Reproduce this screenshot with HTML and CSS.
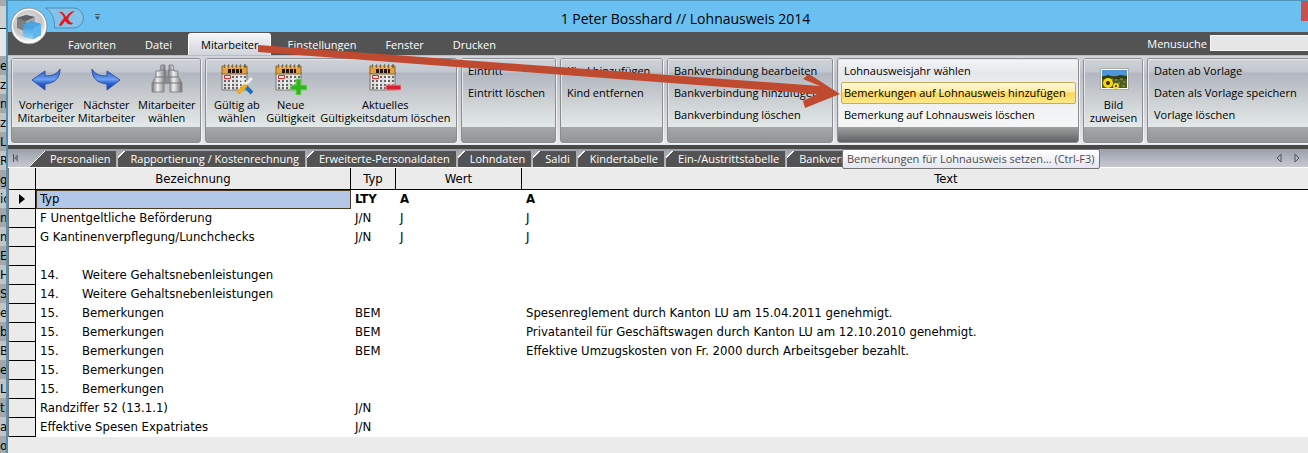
FILE: index.html
```
<!DOCTYPE html>
<html lang="de">
  <head>
    <meta charset="utf-8" />
    <title>1 Peter Bosshard // Lohnausweis 2014</title>
    <link rel="stylesheet" href="styles.css">
  </head>

  <body class="desktop">
    <div class="background-list">
      <div class="background-head"></div>
      <div class="background-row">er</div>
      <div class="background-row">ze</div>
      <div class="background-row">nä</div>
      <div class="background-row">z</div>
      <div class="background-row">Lu</div>
      <div class="background-row">Re</div>
      <div class="background-row">g</div>
      <div class="background-row">ic</div>
      <div class="background-row">n</div>
      <div class="background-row">m</div>
      <div class="background-row">Er</div>
      <div class="background-row">H</div>
      <div class="background-row">Su</div>
      <div class="background-row">e</div>
      <div class="background-row">be</div>
      <div class="background-row">Bü</div>
      <div class="background-row">er</div>
      <div class="background-row">Lu</div>
      <div class="background-row">t</div>
      <div class="background-row">a</div>
      <div class="background-row">on</div>
    </div>

    <div class="window">
      <header class="title-bar">
        <button class="quick-button" aria-label="Abbrechen">
          <svg width="40" height="22" viewBox="0 0 40 22">
            <path d="M.5 1h28a10 10 0 0 1 0 20H9.500C10 12 7 5 .5 1z" fill="#83c3ea" stroke="#4f8db2" />
            <path d="M14 5c3-1 5 1 7 5 2-3 5-6 9-6-4 3-6 5-7 8 2 3 3 4 5 4-2 3-6 1-8-2-2 3-3 5-6 5 1-4 3-5 5-8-1-3-3-5-5-6z" fill="#e81414" />
          </svg>
        </button>
        <button class="quick-more" aria-label="Schnellzugriff anpassen">
          <svg width="8" height="8" viewBox="0 0 8 8">
            <path d="M1 1.500h5" stroke="#44525c" />
            <path d="M1 3.500h5L3.500 7z" fill="#44525c" />
          </svg>
        </button>
        <h1 class="title">1 Peter Bosshard // Lohnausweis 2014</h1>
        <button class="close-button" aria-label="Schliessen"></button>
      </header>

      <button class="app-button" aria-label="Anwendungsmenü">
        <svg width="40" height="40" viewBox="0 0 40 40">
          <defs>
            <radialGradient id="orb" cx=".45" cy=".35" r=".65">
              <stop offset="0" stop-color="#e2e2e2" />
              <stop offset=".7" stop-color="#c4c4c4" />
              <stop offset="1" stop-color="#fff" />
            </radialGradient>
            <linearGradient id="cube" x2="0" y2="1">
              <stop offset="0" stop-color="#3c97d6" />
              <stop offset="1" stop-color="#8fd2fa" />
            </linearGradient>
          </defs>
          <circle cx="20" cy="21" r="18" fill="#333" opacity=".6" />
          <circle cx="20" cy="20" r="18" fill="#fafafa" stroke="#8a8f94" />
          <circle cx="20" cy="20" r="16" fill="url(#orb)" />
          <path d="M8 12l9-3 9 2v11l-9 4-9-4z" fill="#7e8082" />
          <path d="M8 12l9-3 9 2-9 4z" fill="#5e6163" />
          <path d="M17 15l9-4v11l-9 4z" fill="#a5a8aa" />
          <path d="M14 19l8-4 10 3v11l-8 4-10-3z" fill="#3b9be0" />
          <path d="M14 19l8-4 10 3-8 4z" fill="#4aa5e2" />
          <path d="M24 22l8-4v11l-8 4z" fill="#5db4ee" />
          <path d="M14 19l10 3v11l-10-3z" fill="url(#cube)" />
        </svg>
      </button>

      <nav class="menu-bar">
        <div class="menu-items">
          <button class="menu-item">Favoriten</button>
          <button class="menu-item">Datei</button>
          <button class="menu-item menu-item-active">Mitarbeiter</button>
          <button class="menu-item">Einstellungen</button>
          <button class="menu-item">Fenster</button>
          <button class="menu-item">Drucken</button>
        </div>
        <div class="menu-search">
          <label for="menusuche">Menusuche</label>
          <input id="menusuche" class="menu-search-input" type="text">
        </div>
      </nav>

      <div class="ribbon">
        <section class="group group-employee">
          <div class="group-body">
            <button class="big-button">
              <svg width="32" height="32" viewBox="0 0 32 32">
                <defs>
                  <linearGradient id="arrow" x2="0" y2="1">
                    <stop offset="0" stop-color="#2552c0" />
                    <stop offset=".5" stop-color="#6da0f0" />
                    <stop offset=".7" stop-color="#2a5fd0" />
                    <stop offset="1" stop-color="#1b3fae" />
                  </linearGradient>
                </defs>
                <path d="M2 17l13-9v5c8 0 12-2 15-7 0 9-5 14-15 15v6z" fill="url(#arrow)" stroke="#2c52ae" />
              </svg>
              <span>Vorheriger<br>Mitarbeiter</span>
            </button>
            <button class="big-button">
              <svg width="32" height="32" viewBox="0 0 32 32">
                <path d="M30 17l-13-9v5c-8 0-12-2-15-7 0 9 5 14 15 15v6z" fill="url(#arrow)" stroke="#2c52ae" />
              </svg>
              <span>Nächster<br>Mitarbeiter</span>
            </button>
            <button class="big-button">
              <svg width="32" height="32" viewBox="0 0 32 32">
                <defs>
                  <linearGradient id="metal">
                    <stop offset="0" stop-color="#6d6f70" />
                    <stop offset=".4" stop-color="#f0f0f0" />
                    <stop offset="1" stop-color="#6a6c6d" />
                  </linearGradient>
                </defs>
                <path d="M13 13h6v8h-6z" fill="#898b8c" />
                <path d="M10 2h4v5h1v7h-1l-1 4v11H1V20l4-7V8h4z" fill="url(#metal)" stroke="#85888a" />
                <path d="M18 2h4l1 6h4v5l4 7v9H19V18l-1-4h-1V7h1z" fill="url(#metal)" stroke="#85888a" />
                <path d="M5 14h9M18 14h9M2 20h11M19 20h11M9 7h5M18 7h5" stroke="#727577" />
              </svg>
              <span>Mitarbeiter<br>wählen</span>
            </button>
          </div>
        </section>

        <section class="group group-validity">
          <div class="group-body">
            <button class="big-button big-button-narrow">
              <svg width="32" height="32" viewBox="0 0 32 32">
                <defs>
                  <g id="calendar">
                    <path d="M1 9h25v18H1z" fill="#dedede" stroke="#777" />
                    <path d="M1 3h25v8H1z" fill="#e6a23a" stroke="#8a6832" />
                    <path d="M4 1v4M8 1v4M12 1v4M16 1v4M20 1v4M24 1v4" stroke="#444" />
                    <path d="M5 1v4M9 1v4M13 1v4M17 1v4M21 1v4" stroke="#eee" />
                    <path d="M7 8h14" stroke="#201508" stroke-width="4" stroke-dasharray="3 1" />
                    <path d="M3 14h23M3 18h23M3 22h23M3 25h23" stroke="#666" stroke-width="2" stroke-dasharray="2 2" />
                    <path d="M10 12v15M18 12v15" stroke="#fff" />
                    <path d="M3.500 12.500h6v3h-6z" fill="#eee" stroke="#e32626" />
                  </g>
                </defs>
                <use href="#calendar" />
                <path d="M17 16c4-1 6 2 5 5l8 9M21 25L31 15" stroke="#eee" stroke-width="3" fill="none" />
                <path d="M25 24l6 6" stroke="#1472c4" stroke-width="4" />
                <path d="M24 23l-6 6" stroke="#efad1e" stroke-width="4" stroke-linecap="round" />
              </svg>
              <span>Gültig ab<br>wählen</span>
            </button>
            <button class="big-button big-button-narrow">
              <svg width="32" height="32" viewBox="0 0 32 32">
                <use href="#calendar" />
                <path d="M21 16h5v6h6v5h-6v5h-5v-5h-5v-5h5z" fill="#32b51e" stroke="#7ad668" />
              </svg>
              <span>Neue<br>Gültigkeit</span>
            </button>
            <button class="big-button big-button-wide">
              <svg width="32" height="32" viewBox="0 0 32 32">
                <use href="#calendar" />
                <path d="M17 22h15v5H17z" fill="#d92031" stroke="#e98a92" />
              </svg>
              <span>Aktuelles<br>Gültigkeitsdatum löschen</span>
            </button>
          </div>
        </section>

        <section class="group group-entry">
          <div class="group-body group-list">
            <button class="list-button">Eintritt</button>
            <button class="list-button">Eintritt löschen</button>
          </div>
        </section>

        <section class="group group-child">
          <div class="group-body group-list">
            <button class="list-button">Kind hinzufügen</button>
            <button class="list-button">Kind entfernen</button>
          </div>
        </section>

        <section class="group group-bank">
          <div class="group-body group-list">
            <button class="list-button">Bankverbindung bearbeiten</button>
            <button class="list-button">Bankverbindung hinzufügen</button>
            <button class="list-button">Bankverbindung löschen</button>
          </div>
        </section>

        <section class="group group-statement group-hover">
          <div class="group-body group-list">
            <button class="list-button">Lohnausweisjahr wählen</button>
            <button class="list-button list-button-hover">Bemerkungen auf Lohnausweis hinzufügen</button>
            <button class="list-button">Bemerkung auf Lohnausweis löschen</button>
          </div>
        </section>

        <section class="group group-picture">
          <div class="group-body">
            <button class="big-button big-button-picture">
              <svg width="32" height="32" viewBox="0 0 32 32">
                <path d="M2.500 5.500h28v21h-28z" fill="#fff" stroke="#aaa" />
                <path d="M4 7h25v18H4z" fill="#4c5c24" />
                <path d="M4 7h25v6H4z" fill="#4f93d8" />
                <path d="M4 14l6-2 6 2 6-2 7 1v3H4z" fill="#2c3d18" />
                <path d="M17 17h2M22 16h3M25 19h2M20 20h2M13 16h2M24 23h3" stroke="#a5a83c" />
                <circle cx="10" cy="20" r="5" fill="#f6d80e" />
                <circle cx="10" cy="20" r="2" fill="#3d2506" />
                <circle cx="18" cy="23" r="3" fill="#f6d80e" />
                <circle cx="18" cy="23" r="1" fill="#3d2506" />
              </svg>
              <span>Bild<br>zuweisen</span>
            </button>
          </div>
        </section>

        <section class="group group-template">
          <div class="group-body group-list">
            <button class="list-button">Daten ab Vorlage</button>
            <button class="list-button">Daten als Vorlage speichern</button>
            <button class="list-button">Vorlage löschen</button>
          </div>
        </section>
      </div>

      <div class="tab-bar">
        <button class="tab-first" aria-label="Erste Seite">
          <svg width="8" height="8" viewBox="0 0 8 8">
            <path d="M1.500 0v8" stroke="#555" />
            <path d="M6 0v8L2 4z" fill="#777" />
          </svg>
        </button>
        <div class="tabs">
          <button class="tab tab-lead">Personalien</button>
          <button class="tab">Rapportierung / Kostenrechnung</button>
          <button class="tab">Erweiterte-Personaldaten</button>
          <button class="tab">Lohndaten</button>
          <button class="tab">Saldi</button>
          <button class="tab">Kindertabelle</button>
          <button class="tab">Ein-/Austrittstabelle</button>
          <button class="tab">Bankverb</button>
        </div>
        <div class="tab-scroll">
          <button class="tab-arrow" aria-label="Zurück">
            <svg width="6" height="10" viewBox="0 0 6 10"><path d="M5 1v8L1 5z" fill="none" stroke="#555" /></svg>
          </button>
          <button class="tab-arrow" aria-label="Weiter">
            <svg width="6" height="10" viewBox="0 0 6 10"><path d="M1 1v8l4-4z" fill="none" stroke="#555" /></svg>
          </button>
        </div>
      </div>

      <table class="data-table">
        <colgroup>
          <col class="col-marker">
          <col class="col-name">
          <col class="col-type">
          <col class="col-value">
          <col>
        </colgroup>
        <thead>
          <tr>
            <th></th>
            <th>Bezeichnung</th>
            <th>Typ</th>
            <th>Wert</th>
            <th class="head-text">Text</th>
          </tr>
        </thead>
        <tbody>
          <tr class="row-current">
            <td class="marker">
              <svg width="6" height="10" viewBox="0 0 6 10"><path d="M0 0v10l6-5z" /></svg>
            </td>
            <td class="cell-selected">Typ</td>
            <td>LTY</td>
            <td>A</td>
            <td>A</td>
          </tr>
          <tr><td class="marker"></td><td>F Unentgeltliche Beförderung</td><td>J/N</td><td>J</td><td>J</td></tr>
          <tr><td class="marker"></td><td>G Kantinenverpflegung/Lunchchecks</td><td>J/N</td><td>J</td><td>J</td></tr>
          <tr><td class="marker"></td><td></td><td></td><td></td><td></td></tr>
          <tr><td class="marker"></td><td><span class="number">14.</span>Weitere Gehaltsnebenleistungen</td><td></td><td></td><td></td></tr>
          <tr><td class="marker"></td><td><span class="number">14.</span>Weitere Gehaltsnebenleistungen</td><td></td><td></td><td></td></tr>
          <tr><td class="marker"></td><td><span class="number">15.</span>Bemerkungen</td><td>BEM</td><td></td><td>Spesenreglement durch Kanton LU am 15.04.2011 genehmigt.</td></tr>
          <tr><td class="marker"></td><td><span class="number">15.</span>Bemerkungen</td><td>BEM</td><td></td><td>Privatanteil für Geschäftswagen durch Kanton LU am 12.10.2010 genehmigt.</td></tr>
          <tr><td class="marker"></td><td><span class="number">15.</span>Bemerkungen</td><td>BEM</td><td></td><td>Effektive Umzugskosten von Fr. 2000 durch Arbeitsgeber bezahlt.</td></tr>
          <tr><td class="marker"></td><td><span class="number">15.</span>Bemerkungen</td><td></td><td></td><td></td></tr>
          <tr><td class="marker"></td><td><span class="number">15.</span>Bemerkungen</td><td></td><td></td><td></td></tr>
          <tr><td class="marker"></td><td>Randziffer 52 (13.1.1)</td><td>J/N</td><td></td><td></td></tr>
          <tr><td class="marker"></td><td>Effektive Spesen Expatriates</td><td>J/N</td><td></td><td></td></tr>
        </tbody>
      </table>
    </div>

    <div class="tooltip" role="tooltip">Bemerkungen für Lohnausweis setzen... (Ctrl-F3)</div>

    <svg class="pointer-arrow" width="590" height="70" viewBox="0 0 590 70">
      <path d="M4 5L566 46 549 39l6-5 31 20-35 14-2-7 14-7L4 12z" fill="#c04a30" />
    </svg>
  </body>
</html>
```

FILE: styles.css
```
:root {
  --ui-font: 'Open Sans', 'Noto Sans', sans-serif;
  --table-font: 'DejaVu Sans Condensed', 'DejaVu Sans', sans-serif;
  --dark: #535353;
  --grid: #ebebeb;
}

* {
  box-sizing: border-box;
}

body {
  margin: 0;
  font-family: var(--ui-font);
  font-size: 11px;
  color: #000;
}

button {
  border: 0;
  padding: 0;
  margin: 0;
  background: transparent;
  color: inherit;
  font: inherit;
  white-space: nowrap;
}

svg {
  display: block;
}

.desktop {
  position: relative;
  display: flex;
  height: 100vh;
  overflow: hidden;
}

/* list behind the window */
.background-list {
  flex: 0 0 6px;
  overflow: hidden;
  background: #c2c2c2;
  font-family: var(--table-font);
  font-size: 13px;
}

.background-head {
  height: 56px;
  border-top: 6px solid #aaa;
  background: linear-gradient(#d0d0d0 22px, #222 22px, #222 23px, #e6e6e6 23px);
}

.background-row {
  height: 19px;
  line-height: 19px;
  white-space: nowrap;
  background: #c4c4c4;
}

.background-row:nth-child(even) {
  background: #a6a6a6;
}

/* window */
.window {
  position: relative;
  flex: 1;
  min-width: 0;
  border-left: 2px solid #4c93ba;
  background: var(--grid);
}

.title-bar {
  display: flex;
  align-items: flex-start;
  height: 32px;
  border-top: 1px solid #4c93ba;
  background: #69c0f1;
}

.quick-button {
  margin: 6px 9px 0 37px;
}

.quick-more {
  margin-top: 12px;
}

.title {
  flex: 1;
  margin: 0;
  padding-top: 7px;
  padding-right: 32px;
  font-size: 14px;
  font-weight: 400;
  line-height: 22px;
  text-align: center;
}

.close-button {
  width: 7px;
  height: 20px;
  background: #c75050;
}

.app-button {
  position: absolute;
  top: 6px;
  left: 1px;
}

.menu-bar {
  display: flex;
  justify-content: space-between;
  height: 23px;
  background: var(--dark);
  color: #fff;
}

.menu-items {
  display: flex;
  gap: 3px;
  padding-top: 1px;
  padding-left: 47px;
}

.menu-item {
  padding: 0 13px;
}

.menu-item-active {
  border: 1px solid #fff;
  border-bottom: 0;
  border-radius: 3px 3px 0 0;
  padding: 0 12px;
  background: linear-gradient(#f4f5f7, #d0d3da);
  color: #000;
}

.menu-search {
  display: flex;
  align-items: center;
  gap: 3px;
  padding-bottom: 1px;
}

.menu-search-input {
  width: 98px;
  height: 16px;
  border: 1px solid #f6f6f6;
  border-right: 0;
  padding: 0 3px;
  background: #e6e6e6;
  font: inherit;
}

/* ribbon */
.ribbon {
  display: flex;
  gap: 4px;
  height: 90px;
  padding: 2px 0 2px 3px;
  border-top: 1px solid #bbb;
  background: linear-gradient(#d2d5db, #bcc0c8 20px, #e6eaeb);
}

.group {
  display: flex;
  flex: none;
  flex-direction: column;
  border: 1px solid #8b8d90;
  border-radius: 3px;
  background: linear-gradient(#a6a9a9, #929595) bottom / 100% 16px no-repeat;
  box-shadow: 1px 1px 0 #f2f4f4;
  overflow: hidden;
}

.group-body {
  display: flex;
  height: 68px;
  padding: 0 3px;
  border-top: 1px solid #e4e6ea;
  border-left: 1px solid #e4e6ea;
  background: linear-gradient(#ced2d8, #c2c6ce 12px, #b1b6c0 13px, #c6cace 34px, #e3e9e8);
}

.group-list {
  flex-direction: column;
  padding: 0 2px;
}

.group-employee { width: 190px; }
.group-validity { width: 252px; }
.group-entry { width: 95px; }
.group-child { width: 103px; }
.group-bank { width: 166px; }
.group-statement { width: 242px; }
.group-picture { width: 60px; }

.group-template {
  flex: 1;
  border-right: 0;
  border-radius: 3px 0 0 3px;
}

.group-hover {
  background-image: linear-gradient(#a3a5a5, #606363);
}

.group-hover .group-body {
  background: linear-gradient(#f2f3f5, #e7e8ec 13px, #f5f7f7);
}

.big-button {
  display: flex;
  flex-direction: column;
  align-items: center;
  width: 61px;
  padding-top: 3px;
  gap: 3px;
  line-height: 13px;
}

.big-button-narrow {
  width: 54px;
}

.big-button-wide {
  width: 136px;
}

.big-button-picture {
  width: 52px;
}

.list-button {
  height: 22px;
  border: 1px solid transparent;
  border-radius: 2px;
  padding: 0 2px;
  line-height: 20px;
  text-align: left;
}

.list-button-hover {
  border-color: #c9ac5a;
  background: linear-gradient(#fffbe0, #fdeb9e 9px, #fdd551 10px, #ffe98e);
}

/* register tabs */
.tab-bar {
  display: flex;
  align-items: flex-end;
  height: 23px;
  border-top: 4px solid #484848;
  border-bottom: 1px solid #fff;
  background: linear-gradient(#9a9fab, #c6c9d0);
}

.tab-first {
  align-self: center;
  width: 22px;
  padding-left: 4px;
}

.tabs {
  display: flex;
  flex: 1;
  gap: 1px;
}

.tab {
  height: 16px;
  padding: 0 6px 0 12px;
  border-right: 1px solid #aaa;
  background: linear-gradient(135deg, transparent 4px, #fff 4px, #fff 5px, var(--dark) 5px);
  color: #fff;
  line-height: 16px;
}

.tab-lead {
  padding-left: 20px;
  background: linear-gradient(135deg, transparent 10px, #fff 10px, #fff 11px, var(--dark) 11px);
}

.tab-scroll {
  display: flex;
  align-self: center;
  gap: 12px;
  padding-right: 8px;
}

/* table */
.data-table {
  width: 100%;
  border-collapse: separate;
  border-spacing: 0;
  border-left: 1px solid #777;
  table-layout: fixed;
  background: #fff;
  font-family: var(--table-font);
  font-size: 13px;
}

.col-marker { width: 27px; }
.col-name { width: 315px; }
.col-type { width: 45px; }
.col-value { width: 126px; }

.data-table th {
  height: 22px;
  padding: 0;
  border-right: 1px solid #000;
  border-bottom: 1px solid #000;
  background: var(--grid);
  font-weight: 400;
}

.data-table .head-text {
  padding-left: 62px;
  border-right: 0;
}

.data-table td {
  height: 19px;
  padding: 0 4px;
  line-height: 17px;
  vertical-align: top;
  white-space: nowrap;
}

.data-table .marker {
  padding: 0 10px;
  border-right: 1px solid #000;
  border-bottom: 1px solid #000;
  background: var(--grid);
  vertical-align: middle;
}

.row-current {
  font-weight: 700;
}

.data-table .cell-selected {
  padding: 0 3px;
  border: 1px solid #4a3820;
  background: #b3c7e8;
  font-weight: 400;
  line-height: 16px;
}

.number {
  display: inline-block;
  width: 42px;
}

/* overlays */
.tooltip {
  position: absolute;
  top: 149px;
  left: 842px;
  height: 20px;
  padding: 0 4px;
  border: 1px solid #767676;
  border-radius: 2px;
  background: linear-gradient(#fff, #e4e5f0);
  color: #4c4c4c;
  line-height: 18px;
}

.pointer-arrow {
  position: absolute;
  top: 40px;
  left: 254px;
  pointer-events: none;
}
```
